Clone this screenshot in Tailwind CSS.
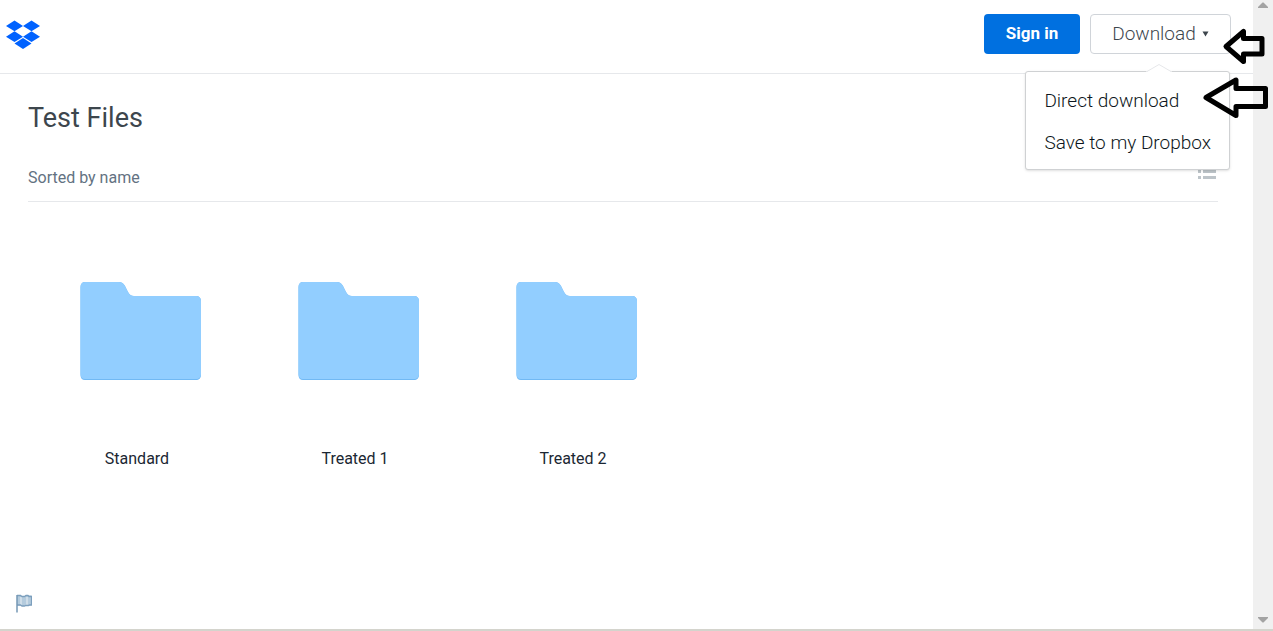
<!DOCTYPE html>
<html lang="en">

<head>
    <meta charset="UTF-8">
    <meta name="viewport" content="width=device-width, initial-scale=1.0">
    <title>Test Files</title>
    <script src="https://cdn.jsdelivr.net/npm/@tailwindcss/browser@4"></script>
</head>

<body class="relative flex h-screen overflow-hidden border-b-2 border-[#d4d4cd] bg-white font-[Roboto,'Liberation_Sans',sans-serif] text-[#1b2733]">

    <div class="flex min-w-0 flex-1 flex-col">
        <!-- Header -->
        <header class="flex items-start justify-between border-b border-[#e6e8eb] pt-[14px] pr-[22px] pb-[19px] pl-[6px]">
            <a href="#" aria-label="Home" class="mt-[6px]">
                <svg class="h-[29px] w-[34px]" viewBox="0 0 34 29" fill="#0062ff">
                    <path d="M8.5 .5L17 5.9L8.5 11.3L0 5.9Z" />
                    <path d="M25.5 .5L34 5.9L25.5 11.3L17 5.9Z" />
                    <path d="M8.5 11.3L17 16.7L8.5 22.1L0 16.7Z" />
                    <path d="M25.5 11.3L34 16.7L25.5 22.1L17 16.7Z" />
                    <path d="M17 18.1L25.5 23.5L17 28.9L8.5 23.5Z" />
                </svg>
            </a>

            <div class="flex gap-[10px]">
                <button type="button" class="h-10 w-24 rounded bg-[#0070e0] text-[17px] font-bold text-white">Sign in</button>

                <div class="relative">
                    <button type="button" id="download-button" aria-expanded="true" class="flex h-10 w-[141px] items-center justify-center gap-[6px] rounded border border-[#d0d4d9] bg-white text-[19px] font-light text-[#3d464d]">
                        Download
                        <svg class="h-[6px] w-[7px]" viewBox="0 0 7 6" fill="#3d464d">
                            <path d="M.5 .5H6.5L3.5 5.5Z" />
                        </svg>
                    </button>

                    <!-- Download menu -->
                    <div id="download-menu" class="absolute top-[57px] right-px z-10 rounded-[3px] border border-[#cfd1d3] bg-white pt-2 pb-[5px] shadow-sm">
                        <svg class="absolute -top-[8px] right-[57px] h-[9px] w-[26px]" viewBox="0 0 26 9">
                            <path d="M0 9V7.5H1L13 .5L25 7.5H26V9Z" fill="#fff" />
                            <path d="M1 7.5L13 .5L25 7.5" fill="none" stroke="#e6e8ea" />
                        </svg>
                        <a href="#" class="block px-[18px] text-[19px] leading-[42px] font-light whitespace-nowrap text-[#0d1620]">Direct download</a>
                        <a href="#" class="block px-[18px] text-[19px] leading-[42px] font-light whitespace-nowrap text-[#0d1620]">Save to my Dropbox</a>
                    </div>
                </div>
            </div>
        </header>

        <!-- Folder contents -->
        <main class="flex-1 pt-7 pr-[35px] pl-7">
            <h1 class="text-[27px] leading-8 text-[#3d464d]">Test Files</h1>

            <div class="mt-8 flex items-center justify-between border-b border-[#e6e8eb] pb-[11px]">
                <span class="text-base leading-6 text-[#637282]">Sorted by name</span>
                <button type="button" aria-label="List view">
                    <svg class="h-5 w-5" viewBox="0 0 20 20" fill="#bdc4c9">
                        <path d="M0 -4H3V-1H0ZM5 -4H18V-1H5ZM0 2H3V5H0ZM5 2H18V5H5ZM0 8H3V11H0ZM5 8H18V11H5Z" />
                    </svg>
                </button>
            </div>

            <ul class="flex flex-wrap pt-[51px]">
                <li class="w-[218px]">
                    <a href="#" class="flex flex-col items-center gap-[34px]">
                        <svg class="h-40 w-40" viewBox="0 0 160 160">
                            <path d="M28 29H62C64.500 29 66.500 30.500 68 33L71 39C72.500 41.500 74 43 77 43H139C142 43 144 45 144 48V122C144 125 142 127 139 127H28C25 127 23.500 125 23.500 122V34C23.500 31 25 29 28 29Z" fill="#71b9f4" />
                            <path d="M28 29H62C64.500 29 66.500 30.500 68 33L71 39C72.500 41.500 74 43 77 43H139C142 43 144 45 144 48V121C144 124 142 126 139 126H28C25 126 23.500 124 23.500 121V34C23.500 31 25 29 28 29Z" fill="#92ceff" />
                        </svg>
                        <span class="text-base leading-6">Standard</span>
                    </a>
                </li>
                <li class="w-[218px]">
                    <a href="#" class="flex flex-col items-center gap-[34px]">
                        <svg class="h-40 w-40" viewBox="0 0 160 160">
                            <path d="M28 29H62C64.500 29 66.500 30.500 68 33L71 39C72.500 41.500 74 43 77 43H139C142 43 144 45 144 48V122C144 125 142 127 139 127H28C25 127 23.500 125 23.500 122V34C23.500 31 25 29 28 29Z" fill="#71b9f4" />
                            <path d="M28 29H62C64.500 29 66.500 30.500 68 33L71 39C72.500 41.500 74 43 77 43H139C142 43 144 45 144 48V121C144 124 142 126 139 126H28C25 126 23.500 124 23.500 121V34C23.500 31 25 29 28 29Z" fill="#92ceff" />
                        </svg>
                        <span class="text-base leading-6">Treated 1</span>
                    </a>
                </li>
                <li class="w-[218px]">
                    <a href="#" class="flex flex-col items-center gap-[34px]">
                        <svg class="h-40 w-40" viewBox="0 0 160 160">
                            <path d="M28 29H62C64.500 29 66.500 30.500 68 33L71 39C72.500 41.500 74 43 77 43H139C142 43 144 45 144 48V122C144 125 142 127 139 127H28C25 127 23.500 125 23.500 122V34C23.500 31 25 29 28 29Z" fill="#71b9f4" />
                            <path d="M28 29H62C64.500 29 66.500 30.500 68 33L71 39C72.500 41.500 74 43 77 43H139C142 43 144 45 144 48V121C144 124 142 126 139 126H28C25 126 23.500 124 23.500 121V34C23.500 31 25 29 28 29Z" fill="#92ceff" />
                        </svg>
                        <span class="text-base leading-6">Treated 2</span>
                    </a>
                </li>
            </ul>
        </main>

        <footer class="flex px-4 pb-4">
            <button type="button" aria-label="Report">
                <svg class="h-[19px] w-4" viewBox="0 0 16 19">
                    <path d="M1 1.500H4.500L6 2.500H8.500L10 1.500H15.500V11L14 11.500H10L8.500 12H6L4.500 11.500H1Z" fill="#b4cbdd" />
                    <path d="M5 3V11M11 3V11" stroke="#cfdde8" stroke-width="2" />
                    <path d="M1 1.500H4.500L6 2.500H8.500L10 1.500H12L13 2.500H15.500V11H13.500L12.500 11.500H10L8.500 12H6L4.500 11H1" fill="none" stroke="#7c9fbd" stroke-width="1.300" />
                    <path d="M1 1V18.500" stroke="#7497b5" stroke-width="1.500" />
                </svg>
            </button>
        </footer>
    </div>

    <!-- Scrollbar -->
    <div class="flex w-5 flex-col items-center justify-between bg-[#f0f0f0] pt-[2px] pb-[6px]">
        <svg class="h-[6px] w-[10px]" viewBox="0 0 10 6" fill="#a3a3a3">
            <path d="M0 6V5L4.500 .5H5.500L10 5V6Z" />
        </svg>
        <svg class="h-[6px] w-[10px]" viewBox="0 0 10 6" fill="#a3a3a3">
            <path d="M0 0V1L4.500 5.500H5.500L10 1V0Z" />
        </svg>
    </div>

    <!-- Pointer arrows -->
    <svg class="pointer-events-none absolute top-0 right-0 z-20 h-32 w-20" viewBox="0 0 80 128" fill="none" stroke="#000" stroke-width="5" stroke-linejoin="round">
        <path d="M33 46.500L50.500 31.500V38.500H69V54H50.500V61.500Z" />
        <path d="M13 97.500L43 80V88.500H72.500V106.500H43V115.500Z" />
    </svg>

</body>

</html>
